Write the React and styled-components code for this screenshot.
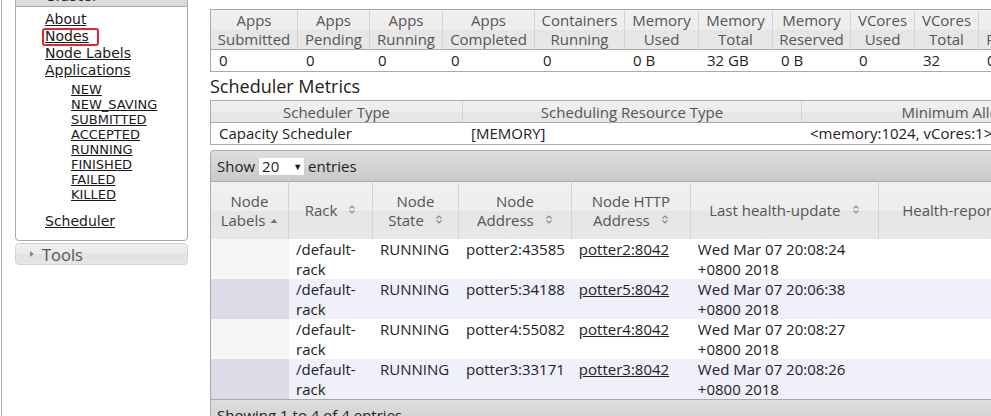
import styled, { createGlobalStyle } from 'styled-components';

const GlobalStyle = createGlobalStyle`
  html, body {
    margin: 0;
    padding: 0;
    background: #fff;
    overflow: hidden;
  }
  body {
    width: 991px;
    height: 416px;
    font-family: "Open Sans", "Noto Sans", sans-serif;
    color: #222;
  }
`;

const metricCols = [
  { w: 87, t: ['Apps', 'Submitted'], v: '0' },
  { w: 72, t: ['Apps', 'Pending'], v: '0' },
  { w: 73, t: ['Apps', 'Running'], v: '0' },
  { w: 92, t: ['Apps', 'Completed'], v: '0' },
  { w: 90, t: ['Containers', 'Running'], v: '0' },
  { w: 74, t: ['Memory', 'Used'], v: '0 B' },
  { w: 74, t: ['Memory', 'Total'], v: '32 GB' },
  { w: 78, t: ['Memory', 'Reserved'], v: '0 B' },
  { w: 64, t: ['VCores', 'Used'], v: '0' },
  { w: 64, t: ['VCores', 'Total'], v: '32' },
  { w: 80, t: ['VCores', 'Reserved'], v: '0' },
  { w: 70, t: ['Active', 'Nodes'], v: '4' },
];

const schedCols = [
  { w: 252, t: 'Scheduler Type', v: 'Capacity Scheduler' },
  { w: 339, t: 'Scheduling Resource Type', v: '[MEMORY]' },
  { w: 340, t: 'Minimum Allocation', v: '<memory:1024, vCores:1>' },
];

const nodeCols = [
  { w: 78, t: ['Node', 'Labels'], sort: 'asc' },
  { w: 84, t: ['Rack'], sort: 'both' },
  { w: 86, t: ['Node', 'State'], sort: 'both' },
  { w: 112, t: ['Node', 'Address'], sort: 'both' },
  { w: 119, t: ['Node HTTP', 'Address'], sort: 'both' },
  { w: 188, t: ['Last health-update'], sort: 'both' },
  { w: 162, t: ['Health-report'], sort: 'both' },
  { w: 110, t: ['Containers'], sort: 'both' },
];

const nodes = [
  { addr: 'potter2:43585', http: 'potter2:8042', time: 'Wed Mar 07 20:08:24 +0800 2018' },
  { addr: 'potter5:34188', http: 'potter5:8042', time: 'Wed Mar 07 20:06:38 +0800 2018' },
  { addr: 'potter4:55082', http: 'potter4:8042', time: 'Wed Mar 07 20:08:27 +0800 2018' },
  { addr: 'potter3:33171', http: 'potter3:8042', time: 'Wed Mar 07 20:08:26 +0800 2018' },
];

const appStates = ['NEW', 'NEW_SAVING', 'SUBMITTED', 'ACCEPTED', 'RUNNING', 'FINISHED', 'FAILED', 'KILLED'];

function SortBoth() {
  return (
    <S.SortIcon width="8" height="11" viewBox="0 0 8 11">
      <path d="M1.5 4.5 L4 2 L6.5 4.5 M1.5 6.5 L4 9 L6.5 6.5" fill="none" stroke="#8a8a8a" strokeWidth="1.1" />
    </S.SortIcon>
  );
}

function SortAsc() {
  return (
    <S.SortIcon $gap={5} width="8" height="6" viewBox="0 0 8 6">
      <path d="M0.5 5 L4 1 L7.5 5 Z" fill="#777" />
    </S.SortIcon>
  );
}

function HeadText({ lines, sort }) {
  return lines.map((line, i) => (
    <span key={line}>
      {line}
      {i === lines.length - 1 && (sort === 'asc' ? <SortAsc /> : <SortBoth />)}
      {i < lines.length - 1 && <br />}
    </span>
  ));
}

export default function App() {
  return (
    <>
      <GlobalStyle />
      <S.Page>
        <S.Nav>
          <S.AccordionHead>Cluster</S.AccordionHead>
          <S.NavBox>
            <S.NavLink href="#">About</S.NavLink>
            <S.NavLink href="#">
              Nodes
              <S.Marker />
            </S.NavLink>
            <S.NavLink href="#">Node Labels</S.NavLink>
            <S.NavLink href="#">Applications</S.NavLink>
            <S.SubList>
              {appStates.map((s) => (
                <S.SubLink key={s} href="#">
                  {s}
                </S.SubLink>
              ))}
            </S.SubList>
            <S.NavLink href="#">Scheduler</S.NavLink>
          </S.NavBox>
          <S.ToolsHead>
            <S.Caret />
            Tools
          </S.ToolsHead>
        </S.Nav>

        <S.Main>
          <S.Grid>
            <colgroup>
              {metricCols.map((c, i) => (
                <col key={i} style={{ width: c.w }} />
              ))}
            </colgroup>
            <thead>
              <tr>
                {metricCols.map((c, i) => (
                  <S.Th key={i}>
                    {c.t[0]}
                    <br />
                    {c.t[1]}
                  </S.Th>
                ))}
              </tr>
            </thead>
            <tbody>
              <tr>
                {metricCols.map((c, i) => (
                  <S.Td key={i}>{c.v}</S.Td>
                ))}
              </tr>
            </tbody>
          </S.Grid>

          <S.Heading>Scheduler Metrics</S.Heading>

          <S.Grid>
            <colgroup>
              {schedCols.map((c, i) => (
                <col key={i} style={{ width: c.w }} />
              ))}
            </colgroup>
            <thead>
              <tr>
                {schedCols.map((c, i) => (
                  <S.Th key={i} $single>
                    {c.t}
                  </S.Th>
                ))}
              </tr>
            </thead>
            <tbody>
              <tr>
                {schedCols.map((c, i) => (
                  <S.Td key={i}>{c.v}</S.Td>
                ))}
              </tr>
            </tbody>
          </S.Grid>

          <S.DataWrap>
            <S.Toolbar>
              Show
              <S.Select>
                20
                <S.SelectArrow>▼</S.SelectArrow>
              </S.Select>
              entries
            </S.Toolbar>
            <S.NodeTable>
              <colgroup>
                {nodeCols.map((c, i) => (
                  <col key={i} style={{ width: c.w }} />
                ))}
              </colgroup>
              <thead>
                <tr>
                  {nodeCols.map((c, i) => (
                    <S.NodeTh key={i}>
                      <HeadText lines={c.t} sort={c.sort} />
                    </S.NodeTh>
                  ))}
                </tr>
              </thead>
              <tbody>
                {nodes.map((n, i) => (
                  <S.NodeRow key={n.addr} $odd={i % 2 === 1}>
                    <S.NodeTd />
                    <S.NodeTd>/default-rack</S.NodeTd>
                    <S.NodeTd>RUNNING</S.NodeTd>
                    <S.NodeTd>{n.addr}</S.NodeTd>
                    <S.NodeTd>
                      <S.CellLink href="#">{n.http}</S.CellLink>
                    </S.NodeTd>
                    <S.NodeTd>{n.time}</S.NodeTd>
                    <S.NodeTd />
                    <S.NodeTd>0</S.NodeTd>
                  </S.NodeRow>
                ))}
              </tbody>
            </S.NodeTable>
            <S.Footer>Showing 1 to 4 of 4 entries</S.Footer>
          </S.DataWrap>
        </S.Main>
      </S.Page>
    </>
  );
}

const S = {
  Page: styled.div`
    display: flex;
    align-items: stretch;
    height: 416px;
  `,
  Nav: styled.nav`
    flex-shrink: 0;
    width: 173px;
    margin-left: 1px;
    margin-right: 22px;
    padding-left: 13px;
    border-left: 1px solid #b4b4b4;
    font-family: Verdana, "DejaVu Sans", sans-serif;
  `,
  AccordionHead: styled.div`
    margin-top: -18px;
    height: 20px;
    padding: 3px 0 0 29px;
    border: 1px solid #aaa;
    border-bottom: 0;
    border-radius: 4px 4px 0 0;
    background: linear-gradient(#e6e6e6, #dadada);
    font-size: 15px;
    line-height: 20px;
    color: #222;
  `,
  NavBox: styled.div`
    display: flex;
    flex-direction: column;
    align-items: flex-start;
    padding: 4px 0 10px 29px;
    border: 1px solid #aaa;
    border-radius: 0 0 4px 4px;
    background: #fff;
  `,
  NavLink: styled.a`
    position: relative;
    font-size: 14px;
    line-height: 17px;
    color: #1a1a1a;
    text-decoration: underline;
  `,
  Marker: styled.span`
    position: absolute;
    left: -3px;
    top: 0;
    width: 53px;
    height: 14px;
    border: 2px solid #e3262b;
    border-radius: 3px;
  `,
  SubList: styled.div`
    display: flex;
    flex-direction: column;
    align-items: flex-start;
    margin: 3px 0 11px 26px;
  `,
  SubLink: styled.a`
    font-size: 13px;
    line-height: 15px;
    color: #1a1a1a;
    text-decoration: underline;
  `,
  ToolsHead: styled.div`
    display: flex;
    align-items: center;
    margin-top: 2px;
    height: 20px;
    padding-left: 14px;
    border: 1px solid #d3d3d3;
    border-radius: 4px;
    background: linear-gradient(#f0f0f0 0%, #ebebeb 50%, #e2e2e2 51%, #e6e6e6 100%);
    font-family: "Open Sans", "Noto Sans", sans-serif;
    font-size: 16.5px;
    color: #555;
  `,
  Caret: styled.span`
    width: 0;
    height: 0;
    margin-right: 8px;
    border-top: 3.5px solid transparent;
    border-bottom: 3.5px solid transparent;
    border-left: 4px solid #888;
  `,
  Main: styled.main`
    flex-shrink: 0;
    display: flex;
    flex-direction: column;
    align-items: flex-start;
    width: 1100px;
  `,
  Grid: styled.table`
    table-layout: fixed;
    border-collapse: separate;
    border-spacing: 0;
    border: 1px solid #aaa;
    font-size: 15px;
    &:first-child {
      margin-top: 9px;
    }
  `,
  Th: styled.th`
    padding: 1px 4px 0;
    line-height: ${(p) => (p.$single ? 20 : 19)}px;
    font-weight: normal;
    color: #555;
    text-align: center;
    white-space: nowrap;
    overflow: hidden;
    border-right: 1px solid #d3d3d3;
    border-bottom: 1px solid #aaa;
    background: linear-gradient(#f0f0f0 0%, #ededed 50%, #e5e5e5 51%, #e8e8e8 100%);
  `,
  Td: styled.td`
    padding: 0 8px;
    line-height: 21px;
    white-space: nowrap;
    overflow: hidden;
    color: #222;
  `,
  Heading: styled.h3`
    margin: 0;
    font-size: 18px;
    font-weight: normal;
    line-height: 28px;
    color: #222;
  `,
  DataWrap: styled.div`
    margin-top: 5px;
    display: flex;
    flex-direction: column;
  `,
  Toolbar: styled.div`
    display: flex;
    align-items: center;
    height: 30px;
    padding-left: 6px;
    border: 1px solid #aaa;
    border-bottom: 0;
    border-radius: 4px 0 0 0;
    background: linear-gradient(#dedede, #c9c9c9);
    font-size: 15px;
    color: #222;
  `,
  Select: styled.span`
    display: flex;
    align-items: center;
    justify-content: space-between;
    width: 40px;
    height: 17px;
    margin: 0 4px 0 4px;
    padding: 0 2px 0 3px;
    background: #fff;
    font-size: 15px;
    line-height: 17px;
  `,
  SelectArrow: styled.span`
    font-size: 9px;
    color: #111;
  `,
  NodeTable: styled.table`
    table-layout: fixed;
    border-collapse: separate;
    border-spacing: 0;
    border-left: 1px solid #aaa;
    font-size: 15px;
  `,
  NodeTh: styled.th`
    height: 57px;
    padding: 0 4px;
    line-height: 19px;
    font-weight: normal;
    color: #555;
    text-align: center;
    vertical-align: middle;
    white-space: nowrap;
    overflow: hidden;
    border-top: 1px solid #aaa;
    border-right: 1px solid #d3d3d3;
    background: linear-gradient(#f0f0f0 0%, #ededed 50%, #e5e5e5 51%, #e8e8e8 100%);
  `,
  SortIcon: styled.svg`
    display: inline-block;
    vertical-align: ${(p) => (p.$gap ? 'middle' : '1px')};
    margin-left: ${(p) => (p.$gap ? p.$gap : 11)}px;
  `,
  NodeRow: styled.tr`
    background: ${(p) => (p.$odd ? '#f0f0fa' : '#fff')};
    & > td:first-child {
      background: ${(p) => (p.$odd ? '#dcdce8' : '#f6f6f6')};
    }
  `,
  NodeTd: styled.td`
    height: 40px;
    padding: 0 7px;
    line-height: 20px;
    vertical-align: top;
    color: #222;
    overflow: hidden;
  `,
  CellLink: styled.a`
    color: #222;
    text-decoration: underline;
    white-space: nowrap;
  `,
  Footer: styled.div`
    height: 30px;
    padding: 5px 0 0 6px;
    border: 1px solid #aaa;
    border-bottom: 0;
    background: linear-gradient(#dedede, #c9c9c9);
    font-size: 15px;
    line-height: 20px;
    color: #222;
  `,
};
